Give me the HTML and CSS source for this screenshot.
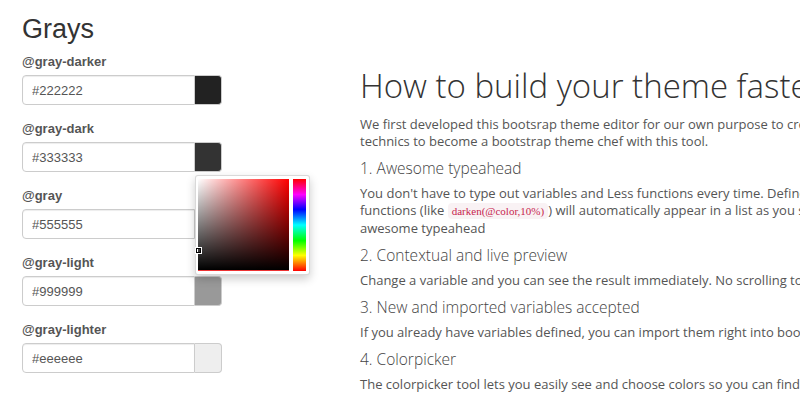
FILE: index.html
```html
<!DOCTYPE html>
<html lang="en">
<head>
  <meta charset="UTF-8">
  <title>Theme editor - Grays</title>
  <link rel="stylesheet" href="styles.css">
</head>
<body>
  <div class="page">
    <section class="vars">
      <h2>Grays</h2>
      <div class="group">
        <label>@gray-darker</label>
        <div class="field">
          <input type="text" value="#222222">
          <span class="swatch" style="background-color: #222222"></span>
        </div>
      </div>
      <div class="group picking">
        <label>@gray-dark</label>
        <div class="field">
          <input type="text" value="#333333">
          <span class="swatch" style="background-color: #333333"></span>
        </div>
        <div class="colorpicker">
          <div class="saturation"><i></i></div>
          <div class="hue"></div>
        </div>
      </div>
      <div class="group">
        <label>@gray</label>
        <div class="field">
          <input type="text" value="#555555">
          <span class="swatch" style="background-color: #555555"></span>
        </div>
      </div>
      <div class="group">
        <label>@gray-light</label>
        <div class="field">
          <input type="text" value="#999999">
          <span class="swatch" style="background-color: #999999"></span>
        </div>
      </div>
      <div class="group">
        <label>@gray-lighter</label>
        <div class="field">
          <input type="text" value="#eeeeee">
          <span class="swatch" style="background-color: #eeeeee"></span>
        </div>
      </div>
    </section>

    <section class="intro">
      <h1>How to build your theme faster</h1>
      <p>We first developed this bootsrap theme editor for our own purpose to create themes quickly. Here are some<br>technics to become a bootstrap theme chef with this tool.</p>
      <h4>1. Awesome typeahead</h4>
      <p>You don't have to type out variables and Less functions every time. Defined variables and Less<br>functions (like <code>darken(@color,10%)</code>) will automatically appear in a list as you start typing, thanks to our<br>awesome typeahead</p>
      <h4>2. Contextual and live preview</h4>
      <p>Change a variable and you can see the result immediately. No scrolling to check the preview.</p>
      <h4>3. New and imported variables accepted</h4>
      <p>If you already have variables defined, you can import them right into bootstrap magic.</p>
      <h4>4. Colorpicker</h4>
      <p>The colorpicker tool lets you easily see and choose colors so you can find just the right one.</p>
    </section>
  </div>
</body>
</html>
```

FILE: styles.css
```css
body {
  margin: 0;
  background: #fff;
  color: #333;
  font-family: "Liberation Sans", Arial, sans-serif;
  overflow: hidden;
}
.page {
  display: flex;
  width: 800px;
  height: 400px;
  overflow: hidden;
}
.vars {
  flex: 0 0 200px;
  padding-left: 22px;
}
.vars h2 {
  margin: 14px 0 8px;
  font-size: 27px;
  font-weight: normal;
  line-height: 30px;
  color: #333;
}
.group {
  position: relative;
  margin-bottom: 14px;
}
.group label {
  display: block;
  margin-bottom: 3px;
  font-size: 13px;
  font-weight: bold;
  line-height: 20px;
  color: #555;
}
.field {
  display: flex;
  height: 30px;
}
.field input {
  box-sizing: border-box;
  width: 173px;
  height: 30px;
  margin: 0;
  padding: 0 9px;
  border: 1px solid #ccc;
  border-radius: 4px 0 0 4px;
  font-family: "Liberation Sans", Arial, sans-serif;
  font-size: 13px;
  color: #555;
  box-shadow: inset 0 1px 1px rgba(0,0,0,.075);
}
.swatch {
  box-sizing: border-box;
  width: 27px;
  height: 30px;
  border: 1px solid #ccc;
  border-left: 0;
  border-radius: 0 4px 4px 0;
}
.colorpicker {
  position: absolute;
  left: 173px;
  top: 56px;
  z-index: 10;
  display: flex;
  gap: 4px;
  padding: 3px 3px 3px 2px;
  background: #fff;
  border: 1px solid rgba(0,0,0,.15);
  border-radius: 3px;
  box-shadow: 0 4px 10px rgba(0,0,0,.2);
}
.saturation {
  position: relative;
  width: 91px;
  height: 91px;
  background:
    linear-gradient(to bottom, rgba(0,0,0,0), #000),
    linear-gradient(to right, #fff, rgba(255,255,255,0)),
    #f00;
  border-bottom: 1px solid #e33;
}
.saturation i {
  position: absolute;
  left: -2px;
  top: 69px;
  width: 3px;
  height: 3px;
  border: 1px solid #000;
  box-shadow: 0 0 0 1px #fff;
  background: transparent;
}
.hue {
  width: 13px;
  height: 92px;
  background: linear-gradient(to bottom, #f00, #f0f 17%, #00f 33%, #0ff 50%, #0f0 67%, #ff0 83%, #f00);
}
.intro {
  flex: 0 0 auto;
  width: 700px;
  margin-left: 138px;
  padding-top: 68px;
  font-family: "Open Sans", sans-serif;
  color: #555;
  white-space: nowrap;
}
.intro h1 {
  margin: 0 0 12px;
  font-size: 33px;
  font-weight: 300;
  line-height: 36px;
  color: #333;
}
.intro h4 {
  margin: 8px 0 7px;
  font-size: 15.5px;
  font-weight: 300;
  line-height: 20px;
  color: #444;
}
.intro p {
  margin: 0;
  font-size: 13px;
  line-height: 17px;
}
.intro code {
  padding: 2px 4px;
  font-family: "Liberation Serif", serif;
  font-size: 11px;
  color: #c7254e;
  background: #f9f2f4;
  border-radius: 4px;
}
```
